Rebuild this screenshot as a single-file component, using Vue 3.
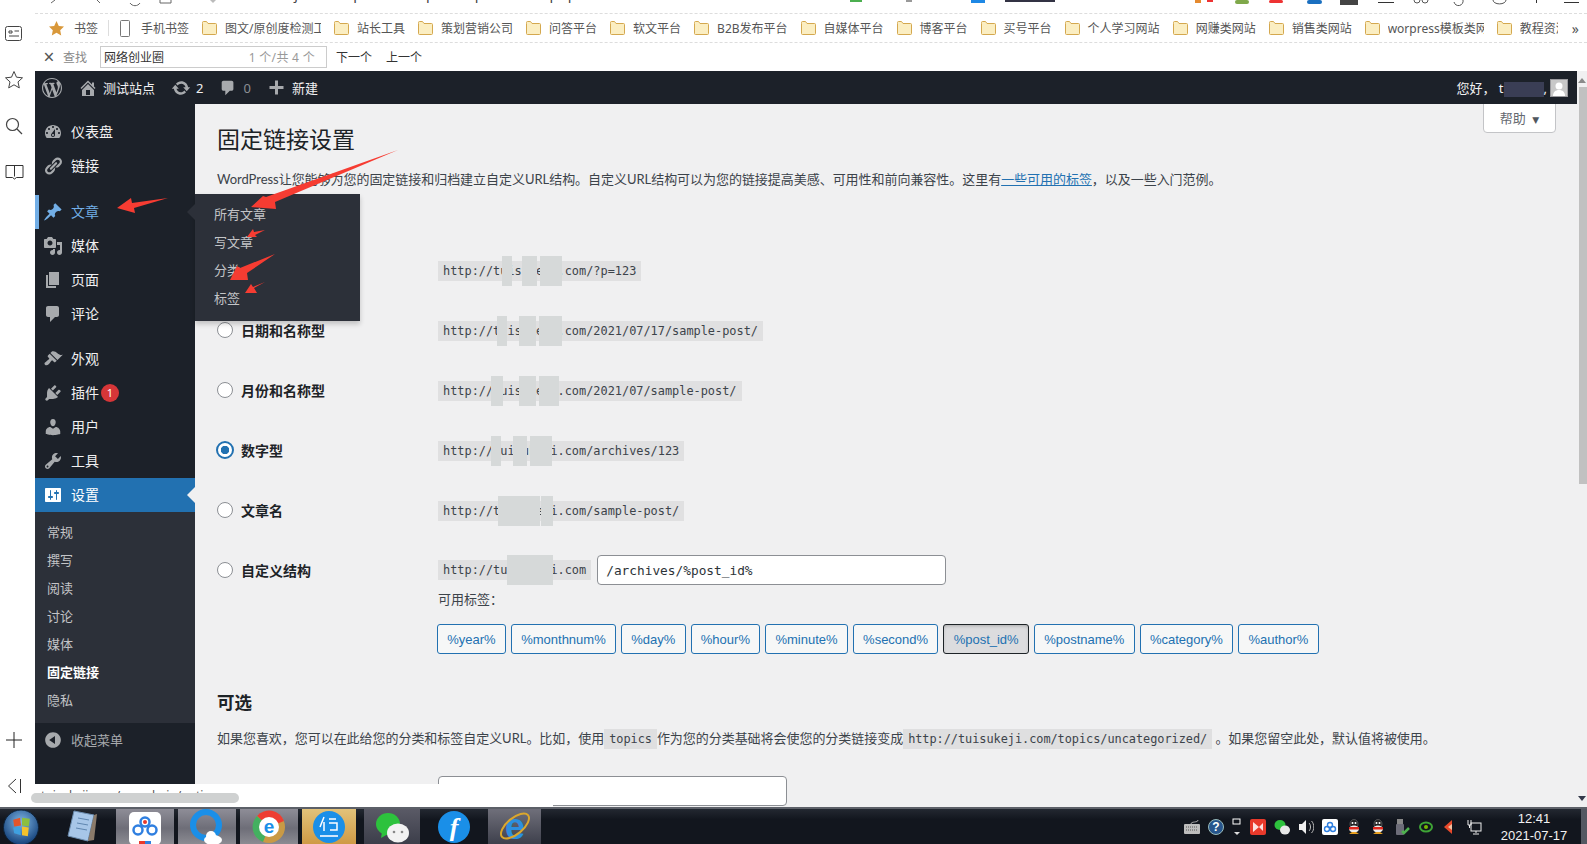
<template>
  <div class="screen">
    <div class="upper">
      <!-- browser side rail -->
      <aside class="rail">
        <div class="rail-item">
          <svg width="20" height="18" viewBox="0 0 20 18" fill="none" stroke="#444"><rect x="1.5" y="1.5" width="16" height="14" rx="2" /><path d="M5 6h3v2H5zM10.500 6H15M5 11h10" /></svg>
        </div>
        <div class="rail-item">
          <svg width="20" height="20" viewBox="0 0 20 20" fill="none" stroke="#444"><path d="M10 1.500l2.500 5.700 6 .6-4.500 4.100 1.300 6L10 14.800l-5.300 3.100 1.300-6L1.500 7.800l6-.6z" /></svg>
        </div>
        <div class="rail-item">
          <svg width="18" height="18" viewBox="0 0 18 18" fill="none" stroke="#444" stroke-width="1.200"><circle cx="7.500" cy="7.500" r="6" /><path d="M12 12l5 5" /></svg>
        </div>
        <div class="rail-item">
          <svg width="19" height="16" viewBox="0 0 19 16" fill="none" stroke="#333"><path d="M1 1.500h17v12h-6.500l-2 1.500-2-1.500H1zM9.500 1.500v11" /></svg>
        </div>
        <div class="rail-item rail-plus">
          <svg width="16" height="16" viewBox="0 0 16 16" stroke="#222"><path d="M8 0v16M0 8h16" /></svg>
        </div>
        <div class="rail-item rail-last">
          <svg width="15" height="16" viewBox="0 0 15 16" fill="none" stroke="#333"><path d="M9 1L1.500 8 9 15M13.500 1v14" /></svg>
        </div>
      </aside>

      <div class="browser">
        <div class="nav-row">
          <span class="url-text">tuisukeji.com/wp-admin/options-permalink.php</span>
          <svg class="nav-scraps" width="1552" height="13" viewBox="0 0 1552 13">
            <path d="M20 0l-4 3M62 0l3 3M95 3a6 6 0 0 0 10 0M125 0v3h11V0" fill="none" stroke="#666" />
            <path d="M175 0l3 3 3-3z" fill="#bbb" />
            <rect x="815" y="0" width="12" height="2" fill="#4caf50" />
            <rect x="871" y="0" width="6" height="2" fill="#999" />
            <rect x="936" y="0" width="14" height="3" fill="#1e88e5" />
            <rect x="970" y="0" width="50" height="2" fill="#334" />
            <rect x="1160" y="0" width="6" height="3" fill="#e58a2e" />
            <rect x="1172" y="0" width="6" height="2" fill="#e33" />
            <rect x="1200" y="0" width="14" height="4" rx="2" fill="#7fa84a" />
            <rect x="1234" y="0" width="14" height="3" rx="1.500" fill="#e33" />
            <rect x="1272" y="0" width="15" height="4" rx="2" fill="#1a6fc0" />
            <rect x="1305" y="0" width="18" height="5" fill="#444" />
            <rect x="1343" y="2" width="16" height="1" fill="#333" />
            <circle cx="1382" cy="0" r="3" fill="none" stroke="#555" />
            <circle cx="1390" cy="0" r="3" fill="none" stroke="#555" />
            <path d="M1419 2a4 4 0 0 0 9-2M1458 0a5 3 0 0 0 13 0" fill="none" stroke="#555" />
            <rect x="1501" y="0" width="1" height="3" fill="#333" />
            <rect x="1529" y="2" width="15" height="1" fill="#333" />
          </svg>
        </div>

        <div class="bookmarks">
          <svg class="bm-star" width="15" height="15" viewBox="0 0 15 15"><path d="M7.500 0l2.300 5 5.200.6-3.800 3.600 1 5.300-4.700-2.700-4.700 2.700 1-5.300L0 5.600 5.200 5z" fill="#d9983a" /></svg>
          <span class="bm-root">书签</span>
          <i class="bm-divider"></i>
          <svg width="10" height="17" viewBox="0 0 10 17" fill="none" stroke="#777"><rect x=".5" y=".5" width="9" height="16" rx="1" /></svg>
          <span class="bm-text bm-phone">手机书签</span>
          <div v-for="mark in bookmarks" :key="mark.name" class="bm">
            <svg width="15" height="14" viewBox="0 0 15 14"><path d="M.5 2.500V1.500a1 1 0 0 1 1-1h3l1.500 2h7.500a1 1 0 0 1 1 1v9a1 1 0 0 1-1 1h-12a1 1 0 0 1-1-1z" fill="#fbeec2" stroke="#d4a84f" /></svg>
            <span class="bm-text" :class="{ 'bm-cut': mark.cut }" :style="mark.cut ? { width: mark.cut + 'px' } : null">{{ mark.name }}</span>
          </div>
          <span class="bm-more">»</span>
        </div>

        <div class="find-row">
          <span class="find-close">×</span>
          <span class="find-label">查找</span>
          <div class="find-box">
            <span>网络创业圈</span>
            <span class="find-count">1 个/共 4 个</span>
          </div>
          <span class="find-link">下一个</span>
          <span class="find-link">上一个</span>
        </div>

        <div class="page">
          <div class="wp">
            <header class="adminbar">
              <svg class="bar-logo" width="20" height="20" viewBox="0 0 20 20"><path :d="icons.logo" fill="#a7aaad" /></svg>
              <svg class="bar-icon" width="20" height="20" viewBox="0 0 20 20"><path :d="icons.home" fill="#a7aaad" /></svg>
              <span class="bar-text">测试站点</span>
              <svg class="bar-icon bar-gap" width="20" height="20" viewBox="0 0 20 20"><path :d="icons.update" fill="#a7aaad" /></svg>
              <span class="bar-text">2</span>
              <svg class="bar-icon bar-gap" width="18" height="18" viewBox="0 0 20 20"><path :d="icons.comments" fill="#a7aaad" /></svg>
              <span class="bar-text bar-dim">0</span>
              <svg class="bar-icon bar-plus" width="17" height="17" viewBox="0 0 17 17"><path d="M7 1.500h3v5.500h5.500v3H10v5.500H7V10H1.500V7H7z" fill="#a7aaad" /></svg>
              <span class="bar-text bar-new">新建</span>
              <div class="bar-account">
                <span class="bar-text greet">您好， t<span class="name-blur">uisukeji</span>,</span>
                <span class="avatar">
                  <svg width="18" height="18" viewBox="0 0 18 18"><rect width="18" height="18" fill="#9a9a9e" /><rect x="1" y="1" width="16" height="16" fill="#c8c8c8" /><circle cx="9" cy="7" r="3.500" fill="#fff" /><path d="M3 17c0-4 2.500-6 6-6s6 2 6 6z" fill="#fff" /></svg>
                </span>
              </div>
            </header>

            <div class="wp-body">
              <nav class="sidebar">
                <template v-for="item in menu" :key="item.label">
                  <div class="menu-item" :class="{ spaced: item.spaced, hovered: item.flyout, current: item.current, 'spaced-small': item.spacedSmall }">
                    <svg width="20" height="20" viewBox="0 0 20 20"><path :d="icons[item.icon]" /></svg>
                    <span class="menu-label">{{ item.label }}</span>
                    <span v-if="item.badge" class="badge">{{ item.badge }}</span>
                    <div v-if="item.flyout" class="flyout">
                      <a v-for="sub in item.flyout" :key="sub">{{ sub }}</a>
                    </div>
                  </div>
                </template>
                <div class="submenu">
                  <a v-for="sub in settingsSub" :key="sub" :class="{ on: sub === '固定链接' }">{{ sub }}</a>
                </div>
                <div class="collapse">
                  <svg width="20" height="20" viewBox="0 0 20 20"><path :d="icons.collapse" /></svg>
                  <span class="menu-label">收起菜单</span>
                </div>
              </nav>

              <main class="content">
                <div class="help-tab">帮助 <span class="help-caret">▼</span></div>
                <h1>固定链接设置</h1>
                <p class="intro">WordPress让您能够为您的固定链接和归档建立自定义URL结构。自定义URL结构可以为您的链接提高美感、可用性和前向兼容性。这里有<a href="#">一些可用的标签</a>，以及一些入门范例。</p>

                <div class="options">
                  <div v-for="opt in options" :key="opt.label" class="option">
                    <label class="opt-label">
                      <span class="radio" :class="{ checked: opt.checked }"></span>
                      {{ opt.label }}
                    </label>
                    <div class="opt-value">
                      <code class="url-code">
                        {{ opt.url }}
                        <i v-for="blob in opt.blobs" :key="blob[0]" class="blob" :style="{ left: blob[0] + 'px', width: blob[1] + 'px' }"></i>
                      </code>
                    </div>
                  </div>

                  <div class="option custom">
                    <label class="opt-label">
                      <span class="radio"></span>
                      自定义结构
                    </label>
                    <div class="custom-value">
                      <div class="custom-line">
                        <code class="url-code">
                          http://tuisukeji.com
                          <i class="blob" style="left: 69px; width: 46px"></i>
                        </code>
                        <input class="text-input" type="text" value="/archives/%post_id%" />
                      </div>
                      <div class="tags-hint">可用标签：</div>
                      <div class="tags">
                        <button v-for="tag in tags" :key="tag" type="button" class="tag" :class="{ pressed: tag === '%post_id%' }">{{ tag }}</button>
                      </div>
                    </div>
                  </div>
                </div>

                <h2>可选</h2>
                <p class="intro second">如果您喜欢，您可以在此给您的分类和标签自定义URL。比如，使用<code>topics</code>作为您的分类基础将会使您的分类链接变成<code>http://tuisukeji.com/topics/uncategorized/</code> 。如果您留空此处，默认值将被使用。</p>

                <div class="base-row">
                  <label class="base-label">分类前缀</label>
                  <input class="text-input base-input" type="text" />
                </div>
              </main>
            </div>
          </div>

          <div class="scrollbar">
            <span class="scroll-up"></span>
            <span class="scroll-thumb"></span>
            <span class="scroll-down"></span>
          </div>
        </div>
      </div>
    </div>

    <footer class="taskbar">
      <div class="orb">
        <svg width="38" height="37" viewBox="0 0 38 38">
          <defs>
            <radialGradient id="orbFill" cx="50%" cy="35%" r="65%"><stop offset="0" stop-color="#7fb6e6" /><stop offset="1" stop-color="#123f78" /></radialGradient>
          </defs>
          <circle cx="19" cy="19" r="18" fill="url(#orbFill)" stroke="#0c2138" />
          <path d="M11 11l7-2 1 8-7 1z" fill="#e2552b" />
          <path d="M20 9l8 1-1 8-7-1z" fill="#8cbf3f" />
          <path d="M11 19l7-1 1 9-7-2z" fill="#3fa0e0" />
          <path d="M20 18l7 1-1 9-6-1z" fill="#f4c22b" />
        </svg>
      </div>
      <div class="notepad">
        <svg width="32" height="36" viewBox="0 0 32 36">
          <path d="M8 2l20 4-6 26-20-5z" fill="#a7c6e8" stroke="#6b8cae" />
          <path d="M12 9l11 2M11 14l11 2M10 19l11 2" stroke="#5f86b0" />
          <path d="M2 27l20 5 6-1 3-26-3 1-6 26z" fill="#8a7a6a" />
        </svg>
      </div>

      <div class="tile first-tile">
        <svg width="34" height="36" viewBox="0 0 34 36">
          <rect x="1" y="3" width="32" height="33" rx="5" fill="#fff" />
          <circle cx="17" cy="13" r="4.500" fill="none" stroke="#2f7fe0" stroke-width="2.500" />
          <circle cx="10" cy="21" r="4.500" fill="none" stroke="#2f7fe0" stroke-width="2.500" />
          <circle cx="24" cy="21" r="4.500" fill="none" stroke="#2f7fe0" stroke-width="2.500" />
          <circle cx="17" cy="13" r="2" fill="#e8392b" />
          <rect x="11" y="32" width="6" height="3" fill="#e8392b" />
          <rect x="17" y="32" width="6" height="3" fill="#2f7fe0" />
        </svg>
      </div>
      <div class="tile">
        <svg width="36" height="36" viewBox="0 0 36 36">
          <circle cx="17" cy="16" r="13" fill="none" stroke="#1a8fe8" stroke-width="6" />
          <ellipse cx="24" cy="31" rx="9" ry="5" fill="#fff" />
          <circle cx="22" cy="27" r="5" fill="#fff" />
        </svg>
      </div>
      <div class="tile">
        <svg width="36" height="36" viewBox="0 0 36 36">
          <circle cx="18" cy="18" r="16" fill="#c99a45" />
          <path d="M18 18L6 7a16 16 0 0 1 27 5z" fill="#ee3d32" />
          <path d="M18 18L6 7a16 16 0 0 0 6 26z" fill="#43b060" />
          <circle cx="18" cy="18" r="10" fill="#fff" />
          <text x="18" y="24" text-anchor="middle" class="tile-letter">e</text>
        </svg>
      </div>
      <div class="tile gold">
        <svg width="34" height="36" viewBox="0 0 34 36">
          <circle cx="17" cy="18" r="16" fill="#1a8fe8" />
          <path d="M12 8l-4 10M12 13v9M17 10h7M17 14h8v7h-7" fill="none" stroke="#fff" stroke-width="1.500" />
          <path d="M8 27h18" stroke="#cfe6fb" stroke-width="2" />
        </svg>
      </div>
      <div class="tile wide">
        <svg width="36" height="36" viewBox="0 0 36 36">
          <ellipse cx="14" cy="15" rx="12" ry="11" fill="#2dc23d" />
          <path d="M8 23l-1 6 7-4z" fill="#2dc23d" />
          <ellipse cx="24" cy="24" rx="11" ry="9.500" fill="#f2f2f2" />
          <circle cx="20" cy="23" r="1.300" fill="#888" />
          <circle cx="28" cy="23" r="1.300" fill="#888" />
        </svg>
      </div>
      <div class="plain-task">
        <svg width="32" height="32" viewBox="0 0 32 32">
          <circle cx="16" cy="16" r="16" fill="#1a8fe8" />
          <text x="16" y="25" text-anchor="middle" class="tile-flash">f</text>
        </svg>
      </div>
      <div class="tile ie">
        <svg width="36" height="36" viewBox="0 0 36 36">
          <text x="18" y="30" text-anchor="middle" class="tile-ie">e</text>
          <ellipse cx="18" cy="17" rx="17" ry="8" transform="rotate(-40 18 17)" fill="none" stroke="#dba72c" stroke-width="2" />
        </svg>
      </div>

      <div class="tray">
        <svg width="16" height="14" viewBox="0 0 16 14"><rect y="4" width="16" height="10" rx="1" fill="#bdbdbd" /><path d="M2 7h12M2 10h12" stroke="#555" stroke-dasharray="1 1" /><path d="M7 4c0-3 7-1 7-4" fill="none" stroke="#aaa" /></svg>
        <svg width="16" height="16" viewBox="0 0 16 16"><circle cx="8" cy="8" r="7.500" fill="#27558c" stroke="#9bb" /><text x="8" y="12" text-anchor="middle" class="tray-q">?</text></svg>
        <svg width="10" height="18" viewBox="0 0 10 18"><rect x="1" y="1" width="7" height="5" fill="none" stroke="#fff" /><path d="M2 14h6l-3 3z" fill="#ddd" /></svg>
        <svg width="16" height="16" viewBox="0 0 16 16"><rect width="16" height="16" rx="2" fill="#e8392b" /><path d="M3 3l6 5-6 5zM9 8l4-4v8z" fill="#fff" opacity=".85" /></svg>
        <svg width="16" height="16" viewBox="0 0 16 16"><ellipse cx="6" cy="6" rx="5.500" ry="5" fill="#2dc23d" /><ellipse cx="11" cy="11" rx="5" ry="4.500" fill="#e8e8e8" /></svg>
        <svg width="16" height="16" viewBox="0 0 16 16"><path d="M1 5h3l4-4v14l-4-4H1z" fill="#eee" /><path d="M11 4c2 2 2 6 0 8M13.500 2c3 3 3 9 0 12" fill="none" stroke="#bbb" /></svg>
        <svg width="16" height="16" viewBox="0 0 16 16"><rect width="16" height="16" rx="2" fill="#fff" /><circle cx="8" cy="6" r="2.500" fill="none" stroke="#2f7fe0" stroke-width="1.400" /><circle cx="5" cy="10" r="2.500" fill="none" stroke="#2f7fe0" stroke-width="1.400" /><circle cx="11" cy="10" r="2.500" fill="none" stroke="#2f7fe0" stroke-width="1.400" /></svg>
        <svg v-for="n in 2" :key="n" width="16" height="16" viewBox="0 0 16 16"><ellipse cx="8" cy="5" rx="4" ry="4.500" fill="#222" stroke="#888" stroke-width=".5" /><circle cx="6.500" cy="4" r="1" fill="#fff" /><circle cx="9.500" cy="4" r="1" fill="#fff" /><ellipse cx="8" cy="10" rx="5" ry="3.500" fill="#eee" /><path d="M3 8h10v2.500H3z" fill="#e0281e" /><path d="M3 15l3-2h4l3 2z" fill="#e8a020" /></svg>
        <svg width="16" height="16" viewBox="0 0 16 16"><rect x="3" y="0" width="6" height="5" fill="#888" /><rect x="2" y="5" width="8" height="11" rx="1" fill="#6c6c78" /><path d="M8 12l2 2 5-5" fill="none" stroke="#4fb24f" stroke-width="2.500" /></svg>
        <svg width="16" height="16" viewBox="0 0 16 16"><ellipse cx="8" cy="8" rx="6" ry="4.500" fill="none" stroke="#3fa436" stroke-width="2" /><circle cx="8" cy="8" r="2" fill="#76b900" /></svg>
        <svg width="16" height="16" viewBox="0 0 16 16"><path d="M10 1v14L2 8z" fill="#e8492b" /><path d="M6 8l4-3v6z" fill="#f2c0a0" /></svg>
        <svg width="16" height="16" viewBox="0 0 16 16" fill="none" stroke="#eee"><path d="M2 1v5h3V1M3.500 6v3" /><rect x="5" y="4" width="10" height="8" /><path d="M10 12v2M7 15h6" /></svg>
      </div>
      <div class="clock">
        <span>12:41</span>
        <span>2021-07-17</span>
      </div>
      <div class="show-desktop"></div>
    </footer>

    <!-- status bubble of the browser, lies over the page -->
    <div class="status-bubble">
      <span class="status-text">tuisukeji.com/wp-admin/option</span>
      <i class="status-blur"></i>
    </div>

    <!-- red arrows somebody painted on the screenshot -->
    <svg class="marks" width="1587" height="844" viewBox="0 0 1587 844">
      <polygon points="398,150 275,202 276,209 251,207 263,196 266,197" fill="#f63c32" />
      <polygon points="117,208 131,198 132,203 168,198 134,208 135,213" fill="#f63c32" />
      <polygon points="265,230 255,235 257,237 247,237 253,229 254,232" fill="#f63c32" />
      <polygon points="275,254 247,273 248,280 230,280 237,266 240,268" fill="#f63c32" />
      <polygon points="265,282 254,288 257,293 245,293 251,284 253,287" fill="#f63c32" />
    </svg>
  </div>
</template>

<script setup>
const icons = {
  logo: 'M20 10c0-5.510-4.490-10-10-10C4.480 0 0 4.490 0 10c0 5.520 4.480 10 10 10 5.510 0 10-4.480 10-10zM7.780 15.370L4.370 6.220c.55-.02 1.170-.08 1.170-.08.5-.06.44-1.130-.06-1.110 0 0-1.450.11-2.370.11-.18 0-.37 0-.58-.01C4.120 2.690 6.870 1.110 10 1.110c2.330 0 4.450.87 6.050 2.340-.68-.11-1.650.39-1.650 1.580 0 .74.45 1.360.9 2.100.35.61.55 1.360.55 2.460 0 1.490-1.400 5-1.400 5l-3.030-8.370c.54-.02.82-.17.82-.17.5-.05.44-1.250-.06-1.220 0 0-1.440.12-2.380.12-.87 0-2.330-.12-2.330-.12-.5-.03-.56 1.200-.06 1.220l.92.08 1.260 3.410zM17.410 10c.24-.64.74-1.870.43-4.250.7 1.290 1.050 2.710 1.050 4.250 0 3.290-1.730 6.240-4.400 7.780.97-2.590 1.940-5.200 2.920-7.780zM6.100 18.090C3.120 16.650 1.110 13.530 1.110 10c0-1.300.23-2.480.72-3.590C3.250 10.300 4.670 14.200 6.100 18.090zm4.030-6.630l2.580 6.980c-.86.29-1.760.45-2.710.45-.79 0-1.570-.11-2.290-.33.81-2.380 1.620-4.740 2.420-7.100z',
  home: 'M16 8.500l1.530 1.530-1.060 1.060L10 4.620l-6.470 6.470-1.060-1.060L10 2.500l4 4v-2h2v4zm-6-2.460l6 5.990V18H4v-5.970zM12 17v-5H8v5h4z',
  update: 'M10.200 3.280c3.530 0 6.430 2.610 6.920 6h2.080l-3.500 4-3.500-4h2.320c-.45-1.970-2.210-3.450-4.320-3.450-1.450 0-2.730.71-3.540 1.780L4.950 5.660C6.230 4.200 8.110 3.280 10.200 3.280zm-.4 13.440c-3.520 0-6.430-2.610-6.920-6H.8l3.500-4c1.170 1.330 2.330 2.670 3.500 4H5.480c.45 1.970 2.210 3.450 4.320 3.450 1.450 0 2.730-.71 3.540-1.780l1.710 1.950c-1.280 1.460-3.150 2.380-5.250 2.380z',
  dashboard: 'M3.760 16h12.480c1.100-1.370 1.760-3.110 1.760-5 0-4.420-3.580-8-8-8s-8 3.580-8 8c0 1.890.66 3.630 1.760 5zM10 4c.55 0 1 .45 1 1s-.45 1-1 1-1-.45-1-1 .45-1 1-1zM6 6c.55 0 1 .45 1 1s-.45 1-1 1-1-.45-1-1 .45-1 1-1zm8 0c.55 0 1 .45 1 1s-.45 1-1 1-1-.45-1-1 .45-1 1-1zm-5.370 5.550L12 7v6c0 1.100-.9 2-2 2s-2-.9-2-2c0-.57.24-1.080.63-1.450zM4 10c.55 0 1 .45 1 1s-.45 1-1 1-1-.45-1-1 .45-1 1-1zm12 0c.55 0 1 .45 1 1s-.45 1-1 1-1-.45-1-1 .45-1 1-1zm-5 3c0-.55-.45-1-1-1s-1 .45-1 1 .45 1 1 1 1-.45 1-1z',
  links: 'M17.740 2.760c1.680 1.690 1.680 4.410 0 6.100l-1.530 1.520c-1.120 1.120-2.700 1.470-4.140 1.090l2.620-2.610.76-.77.76-.76c.84-.84.84-2.200 0-3.040-.84-.85-2.200-.85-3.040 0l-.77.76-3.380 3.380c-.37-1.440-.02-3.020 1.100-4.140l1.520-1.530c1.690-1.680 4.420-1.680 6.100 0zM8.590 13.430l5.340-5.340c.42-.42.42-1.100 0-1.520-.44-.43-1.130-.39-1.530 0l-5.330 5.340c-.42.42-.42 1.100 0 1.520.44.43 1.130.39 1.520 0zm-.76 2.290l4.140-4.150c.38 1.440.03 3.020-1.090 4.140l-1.520 1.530c-1.690 1.680-4.410 1.680-6.100 0-1.680-1.680-1.680-4.420 0-6.100l1.530-1.520c1.120-1.120 2.700-1.470 4.140-1.100l-4.140 4.150c-.85.84-.85 2.200 0 3.050.84.84 2.200.84 3.040 0z',
  post: 'M10.440 3.020l1.820-1.820 6.360 6.350-1.830 1.820c-1.050-.68-2.480-.57-3.410.36l-.75.75c-.92.93-1.040 2.350-.35 3.410l-1.830 1.820-2.410-2.410-2.800 2.790c-.42.42-3.380 2.710-3.800 2.290s1.860-3.390 2.280-3.810l2.790-2.790L4.100 9.360l1.830-1.820c1.050.69 2.480.57 3.400-.36l.75-.75c.93-.92 1.050-2.350.36-3.410z',
  media: 'M13 11V4c0-.55-.45-1-1-1h-1.670L9 1H5L3.670 3H2c-.55 0-1 .45-1 1v7c0 .55.45 1 1 1h10c.55 0 1-.45 1-1zM7 4.500c1.380 0 2.500 1.120 2.500 2.500S8.380 9.500 7 9.500 4.500 8.380 4.500 7 5.620 4.500 7 4.500zM14 6h5v10.500c0 1.380-1.120 2.500-2.500 2.500S14 17.880 14 16.500s1.120-2.500 2.500-2.500c.17 0 .34.02.5.05V9h-3V6zm-4 8.050V13h2v3.500c0 1.380-1.120 2.500-2.500 2.500S7 17.880 7 16.500 8.120 14 9.500 14c.17 0 .34.02.5.05z',
  page: 'M6 15V2h10v13H6zm-1 1h8v2H3V5h2v11z',
  comments: 'M5 2h9c1.100 0 2 .9 2 2v7c0 1.100-.9 2-2 2h-2l-5 5v-5H5c-1.100 0-2-.9-2-2V4c0-1.100.9-2 2-2z',
  appearance: 'M14.480 11.060L7.410 3.990l1.500-1.500c.5-.56 2.300-.47 3.510.32 1.210.8 1.430 1.280 2.910 2.100 1.180.64 2.450 1.260 4.450.85zm-.71.71L6.700 4.700 4.930 6.470c-.39.39-.39 1.020 0 1.410l1.060 1.060c.39.39.39 1.030 0 1.420-.6.6-1.430 1.110-2.210 1.690-.35.26-.7.53-1.010.84C1.430 13.230 1 14.810 2 15.810s2.580.57 3.930-.77c.31-.31.58-.66.84-1.010.58-.78 1.090-1.610 1.690-2.210.39-.39 1.030-.39 1.420 0l1.060 1.060c.39.39 1.020.39 1.410 0z',
  plugins: 'M13.110 4.360L9.870 7.600 8 5.730l3.240-3.240c.35-.34 1.050-.2 1.560.32.52.51.66 1.210.31 1.550zm-8 1.770l.91-1.120 9.010 9.010-1.190.84c-.71.71-2.630 1.160-3.820 1.160H6.140L4.900 17.260c-.59.59-1.540.59-2.120 0-.59-.58-.59-1.530 0-2.120l1.240-1.240v-3.880c0-1.130.4-3.190 1.090-3.890zm7.260 3.970l3.240-3.240c.34-.35 1.040-.21 1.550.31.52.51.66 1.210.31 1.550l-3.240 3.250z',
  users: 'M10 9.250c-2.270 0-2.730-3.440-2.730-3.440C7 4.020 7.820 2 9.970 2c2.160 0 2.980 2.020 2.710 3.810 0 0-.41 3.440-2.680 3.440zm0 2.570L12.720 10c2.390 0 4.520 2.330 4.520 4.530v2.490s-3.650 1.130-7.240 1.130c-3.650 0-7.240-1.130-7.240-1.130v-2.490c0-2.250 1.940-4.480 4.470-4.480z',
  tools: 'M16.680 9.770c-1.340 1.340-3.300 1.670-4.950.99l-5.410 6.520c-.99.99-2.590.99-3.580 0s-.99-2.590 0-3.570l6.520-5.420c-.68-1.650-.35-3.610.99-4.950 1.280-1.280 3.120-1.620 4.720-1.060l-2.890 2.890 2.820 2.820 2.860-2.870c.53 1.580.18 3.390-1.080 4.650zM3.810 16.210c.4.39 1.040.39 1.430 0 .4-.4.4-1.040 0-1.430-.39-.4-1.030-.4-1.430 0-.39.39-.39 1.030 0 1.430z',
  settings: 'M18 16V4c0-.55-.45-1-1-1H3c-.55 0-1 .45-1 1v12c0 .55.45 1 1 1h14c.55 0 1-.45 1-1zM8 11h1c.55 0 1 .45 1 1s-.45 1-1 1H8v1.500c0 .28-.22.5-.5.5s-.5-.22-.5-.5V13H6c-.55 0-1-.45-1-1s.45-1 1-1h1V5.500c0-.28.22-.5.5-.5s.5.22.5.5V11zm5-2h-1c-.55 0-1-.45-1-1s.45-1 1-1h1V5.500c0-.28.22-.5.5-.5s.5.22.5.5V7h1c.55 0 1 .45 1 1s-.45 1-1 1h-1v5.500c0 .28-.22.5-.5.5s-.5-.22-.5-.5V9z',
  collapse: 'M10 2.160c4.330 0 7.840 3.510 7.840 7.840s-3.510 7.840-7.840 7.840S2.160 14.330 2.160 10 5.710 2.160 10 2.160zm2 11.720V6.120L6.180 9.970z',
}

const bookmarks = [
  { name: '图文/原创度检测工', cut: 96 },
  { name: '站长工具' },
  { name: '策划营销公司' },
  { name: '问答平台' },
  { name: '软文平台' },
  { name: 'B2B发布平台' },
  { name: '自媒体平台' },
  { name: '博客平台' },
  { name: '买号平台' },
  { name: '个人学习网站' },
  { name: '网赚类网站' },
  { name: '销售类网站' },
  { name: 'worpress模板类网站', cut: 96 },
  { name: '教程资源', cut: 38 },
]

const menu = [
  { label: '仪表盘', icon: 'dashboard' },
  { label: '链接', icon: 'links' },
  { label: '文章', icon: 'post', spaced: true, flyout: ['所有文章', '写文章', '分类', '标签'] },
  { label: '媒体', icon: 'media' },
  { label: '页面', icon: 'page' },
  { label: '评论', icon: 'comments' },
  { label: '外观', icon: 'appearance', spacedSmall: true },
  { label: '插件', icon: 'plugins', badge: 1 },
  { label: '用户', icon: 'users' },
  { label: '工具', icon: 'tools' },
  { label: '设置', icon: 'settings', current: true },
]

const settingsSub = ['常规', '撰写', '阅读', '讨论', '媒体', '固定链接', '隐私']

const options = [
  { label: '朴素', url: 'http://tuisukeji.com/?p=123', blobs: [[64, 10], [84, 15], [102, 22]] },
  { label: '日期和名称型', url: 'http://tuisukeji.com/2021/07/17/sample-post/', blobs: [[59, 10], [81, 17], [101, 23]] },
  { label: '月份和名称型', url: 'http://tuisukeji.com/2021/07/sample-post/', blobs: [[53, 12], [81, 17], [101, 20]] },
  { label: '数字型', url: 'http://tuisukeji.com/archives/123', checked: true, blobs: [[53, 10], [75, 14], [92, 22]] },
  { label: '文章名', url: 'http://tuisukeji.com/sample-post/', blobs: [[60, 23], [83, 19], [103, 12]] },
]

const tags = ['%year%', '%monthnum%', '%day%', '%hour%', '%minute%', '%second%', '%post_id%', '%postname%', '%category%', '%author%']
</script>

<style scoped>
.screen {
  position: relative;
  display: flex;
  flex-direction: column;
  width: 1587px;
  height: 844px;
  overflow: hidden;
  background: #fff;
  font-family: "Noto Sans", "Noto Sans CJK SC", sans-serif;
  font-size: 13px;
  color: #3c434a;
}
.upper { flex: 1; min-height: 0; display: flex; }

/* rail */
.rail { width: 35px; flex: none; display: flex; flex-direction: column; padding-top: 11px; box-sizing: border-box; }
.rail-item { height: 46px; flex: none; display: flex; align-items: center; justify-content: center; padding-right: 7px; box-sizing: border-box; }
.rail-plus { margin-top: auto; margin-bottom: 2px; }
.rail-last { height: 42px; }

/* browser chrome */
.browser { flex: 1; min-width: 0; display: flex; flex-direction: column; }
.nav-row { position: relative; height: 13px; flex: none; overflow: hidden; border-bottom: 1px dashed #ddd; }
.url-text { display: block; margin: -16px 0 0 208px; font-size: 14.300px; line-height: 20px; letter-spacing: .3px; color: #444; white-space: nowrap; }
.nav-scraps { position: absolute; left: 0; top: 0; }

.bookmarks { height: 28px; flex: none; display: flex; align-items: center; border-bottom: 1px dashed #ddd; font-size: 12px; color: #555; overflow: hidden; }
.bm-star { margin-left: 14px; }
.bm-root { margin-left: 10px; }
.bm-divider { width: 1px; height: 16px; background: #ddd; margin: 0 11px 0 10px; }
.bm-phone { margin: 0 13px 0 11px; }
.bm { display: flex; align-items: center; gap: 8px; margin-right: 13px; flex: none; }
.bm-text { white-space: nowrap; }
.bm-cut { overflow: hidden; display: block; }
.bm-more { font-size: 14px; margin-left: 1px; }

.find-row { height: 28px; flex: none; display: flex; align-items: center; font-size: 12px; color: #333; }
.find-close { width: 28px; text-align: center; font-size: 19px; line-height: 20px; color: #555; }
.find-label { color: #888; width: 37px; }
.find-box { width: 227px; height: 22px; box-sizing: border-box; border: 1px solid #ccc; display: flex; align-items: center; justify-content: space-between; padding: 0 11px 0 3px; margin-right: 9px; }
.find-count { color: #999; letter-spacing: .3px; }
.find-link { margin-right: 14px; }

/* page */
.page { flex: 1; min-height: 0; display: flex; }
.wp { flex: 1; min-width: 0; display: flex; flex-direction: column; }
.scrollbar { position: relative; width: 10px; flex: none; background: #f0f0f1; display: flex; flex-direction: column; align-items: flex-end; }
.scroll-up { width: 0; height: 0; margin: 7px 1px 4px 0; border: 4px solid transparent; border-top: 0; border-bottom: 5px solid #8a8a8a; }
.scroll-thumb { width: 8px; height: 397px; background: #c1c1c1; }
.scroll-down { width: 0; height: 0; margin-top: auto; margin-bottom: 6px; margin-right: 1px; border: 4px solid transparent; border-bottom: 0; border-top: 5px solid #33384a; }

.adminbar { height: 33px; flex: none; display: flex; align-items: center; background: #1c2129; color: #f0f0f1; }
.bar-logo { margin-left: 7px; }
.bar-icon { margin-left: 16px; flex: none; }
.bar-gap { margin-left: 16px; }
.bar-plus { margin-left: 17px; }
.bar-text { margin-left: 5px; font-size: 13px; white-space: nowrap; }
.bar-new { margin-left: 7px; }
.bar-dim { color: #8c8f94; margin-left: 6px; }
.bar-account { margin-left: auto; margin-right: 9px; display: flex; align-items: center; gap: 3px; }
.greet { margin-left: 0; }
.name-blur { display: inline-block; width: 40px; overflow: hidden; vertical-align: bottom; color: transparent; background: #3a3e55; font-size: 11px; }
.avatar { display: block; width: 18px; height: 18px; }
.avatar svg { display: block; }

.wp-body { flex: 1; min-height: 0; display: flex; }
.sidebar { position: relative; z-index: 2; width: 160px; flex: none; padding-top: 11px; box-sizing: border-box; background: #1c2129; }
.menu-item { position: relative; height: 34px; display: flex; align-items: center; padding-left: 8px; font-size: 14px; color: #f0f0f1; box-sizing: border-box; }
.menu-item svg { fill: #a7aaad; margin-right: 8px; flex: none; }
.menu-label { margin-top: -2px; }
.menu-item.spaced { margin-top: 12px; }
.menu-item.spaced-small { margin-top: 11px; }
.menu-item.hovered { color: #72aee6; border-left: 4px solid #72aee6; padding-left: 4px; }
.menu-item.hovered > svg { fill: #72aee6; }
.menu-item.current { background: #2271b1; color: #fff; }
.menu-item.current svg { fill: #fff; }
.menu-item.current::after { content: ""; position: absolute; right: 0; top: 9px; border: 8px solid transparent; border-left: 0; border-right-color: #f0f0f1; }
.badge { width: 18px; height: 18px; margin-left: 2px; border-radius: 50%; background: #d63638; color: #fff; font-size: 11px; line-height: 18px; text-align: center; }

.flyout { position: absolute; left: 156px; top: -1px; width: 165px; height: 127px; padding-top: 7px; box-sizing: border-box; background: #2c3039; box-shadow: 0 3px 5px rgba(0, 0, 0, .2); font-size: 13px; color: #c3c4c7; }
.flyout::before { content: ""; position: absolute; left: -8px; top: 10px; border: 8px solid transparent; border-left: 0; border-right-color: #2c3039; }
.flyout a { display: block; height: 28px; line-height: 26px; padding-left: 19px; }

.submenu { background: #2c3039; padding: 7px 0 8px; font-size: 13px; color: #c3c4c7; }
.submenu a { display: block; height: 28px; line-height: 26px; padding-left: 12px; }
.submenu a.on { color: #fff; font-weight: 600; }
.collapse { height: 34px; display: flex; align-items: center; padding-left: 8px; color: #a7aaad; font-size: 13px; }
.collapse svg { fill: #a7aaad; margin-right: 8px; }

/* content */
.content { position: relative; flex: 1; min-width: 0; padding-left: 22px; background: #f0f0f1; overflow: hidden; }
.help-tab { position: absolute; right: 21px; top: -1px; width: 73px; height: 30px; box-sizing: border-box; border: 1px solid #c3c4c7; border-radius: 0 0 4px 4px; background: #fff; color: #646970; font-size: 13px; line-height: 28px; text-align: center; }
.help-caret { font-family: "DejaVu Sans", sans-serif; font-size: 9px; color: #50575e; margin-left: 3px; }
h1 { margin: 17px 0 0; font-size: 23px; line-height: 36px; font-weight: 400; color: #1d2327; }
.intro { margin: 12px 0 0; font-family: Lato, "Noto Sans CJK SC", sans-serif; font-size: 13px; line-height: 20px; letter-spacing: -.04px; white-space: nowrap; }
.intro a { color: #2271b1; text-decoration: underline; }
.intro code { padding: 3px 5px; background: rgba(0, 0, 0, .07); font-family: "DejaVu Sans Mono", monospace; font-size: 11.900px; }

.options { margin-top: 52px; }
.option { display: grid; grid-template-columns: 221px 1fr; }
.opt-label { align-self: start; height: 57px; display: flex; align-items: center; gap: 8px; font-size: 14px; font-weight: 600; color: #1d2327; }
.radio { width: 16px; height: 16px; box-sizing: border-box; flex: none; border: 1px solid #8c8f94; border-radius: 50%; background: #fff; }
.radio.checked { width: 18px; height: 18px; margin: 0 -1px; border: 2px solid #2271b1; background: radial-gradient(circle, #2271b1 0 4px, #fff 4.500px); }
.opt-value { height: 60px; display: flex; align-items: center; }
.url-code { position: relative; display: inline-block; padding: 0 5px; height: 20px; line-height: 20px; white-space: nowrap; background: #e0e0e1; font-family: "DejaVu Sans Mono", monospace; font-size: 11.900px; color: #3c434a; flex: none; }
.blob { position: absolute; top: -5px; height: 30px; background: #d6d9d9; }

.custom-value { padding-top: 14px; }
.custom-line { display: flex; align-items: center; gap: 6px; }
.text-input { box-sizing: border-box; height: 30px; width: 349px; padding: 0 8px; border: 1px solid #8c8f94; border-radius: 4px; background: #fff; font-family: "DejaVu Sans Mono", monospace; font-size: 12.800px; color: #2c3338; }
.tags-hint { height: 20px; line-height: 20px; margin-top: 4px; font-size: 13px; }
.tags { display: flex; gap: 5px; margin-top: 15px; margin-left: -1px; }
.tag { height: 30px; padding: 0 9.250px; box-sizing: border-box; border: 1px solid #2271b1; border-radius: 3px; background: #f6f7f7; color: #2271b1; font-family: "Liberation Sans", sans-serif; font-size: 13px; white-space: nowrap; }
.tag.pressed { background: #dcdcde; border-color: #1d2327; box-shadow: inset 0 2px 5px -3px rgba(0, 0, 0, .5); }

h2 { margin: 37px 0 0; font-size: 17.500px; line-height: 22px; font-weight: 600; color: #1d2327; }
.second { margin-top: 15px; }
.base-row { display: grid; grid-template-columns: 221px 1fr; margin-top: 27px; }
.base-label { font-size: 14px; font-weight: 600; line-height: 30px; color: #1d2327; }

/* taskbar */
.taskbar { height: 37px; flex: none; display: flex; align-items: flex-end; background: linear-gradient(#232831, #12161e 30%); border-top: 2px solid #5c6068; box-sizing: border-box; }
.orb { width: 38px; margin-left: 2px; height: 35px; overflow: hidden; }
.notepad { width: 32px; height: 35px; margin-left: 26px; overflow: hidden; }
.tile { width: 58px; height: 35px; margin-left: 4px; display: flex; align-items: flex-end; justify-content: center; overflow: hidden; background: linear-gradient(#8e8d97, #6e6e78 55%, #8b8b92); }
.tile svg { margin-bottom: -1px; flex: none; }
.first-tile { margin-left: 18px; }
.gold { width: 54px; background: linear-gradient(#e2c27a, #cf9a45); }
.wide { width: 56px; margin-left: 8px; background: linear-gradient(#5a5a66, #3c3e4a); }
.plain-task { width: 64px; height: 35px; margin-left: 2px; display: flex; align-items: center; justify-content: center; }
.ie { width: 53px; margin-left: 2px; background: linear-gradient(#6f6f7a, #3e404c); }
.tile-letter { font: 700 19px "Liberation Sans", sans-serif; fill: #1a8fe8; }
.tile-flash { font: italic 700 26px "Liberation Serif", serif; fill: #fff; }
.tile-ie { font: 700 36px "Liberation Sans", sans-serif; fill: #2c8fe0; }
.tray-q { font: 700 12px "Liberation Sans", sans-serif; fill: #fff; }

.tray { margin-left: auto; height: 35px; display: flex; align-items: center; gap: 8px; }
.clock { width: 80px; margin-left: 12px; height: 35px; display: flex; flex-direction: column; align-items: center; justify-content: center; gap: 2px; font-family: "Liberation Sans", sans-serif; font-size: 13px; line-height: 15px; color: #f2f2f2; }
.show-desktop { width: 13px; height: 35px; box-sizing: border-box; border-left: 7px solid transparent; background: #545862; background-clip: padding-box; }

/* overlays */
.status-bubble { position: absolute; z-index: 3; left: 35px; bottom: 37px; width: 518px; height: 23px; background: #fff; border-radius: 0 4px 0 0; }
.status-text { position: absolute; left: 6px; top: 4px; font-size: 12px; line-height: 16px; color: #555; white-space: nowrap; }
.status-blur { position: absolute; left: -4px; top: 9px; width: 208px; height: 10px; border-radius: 5px; background: #cfd1d1; }
.marks { position: absolute; left: 0; top: 0; z-index: 5; pointer-events: none; }
</style>
